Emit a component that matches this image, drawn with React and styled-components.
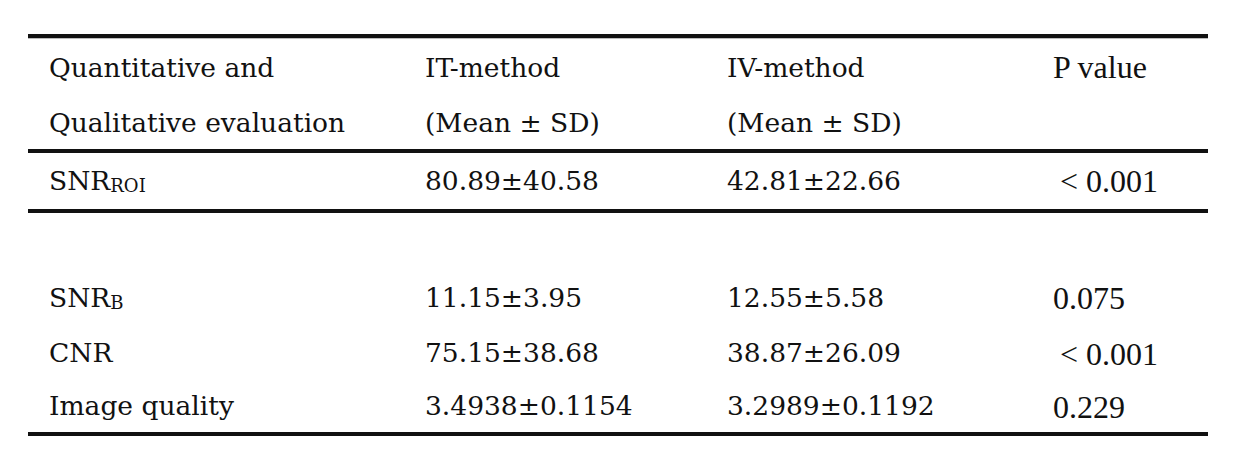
import React from 'react'
import styled, { createGlobalStyle } from 'styled-components'

const Global = createGlobalStyle`
  body {
    margin: 0;
    background: #fff;
  }
`

const Page = styled.div`
  padding: 34px 30px 0 28px;
  color: #111;
`

const Table = styled.table`
  width: 1180px;
  border-collapse: collapse;
  border-top: 4px solid #111;
  border-bottom: 4px solid #111;
  box-shadow: inset 0 1px 0 #bbb;
`

const Row = styled.tr`
  border-bottom: ${(p) => (p.$rule ? '4px solid #111' : 'none')};
`

const Cell = styled.td`
  height: ${(p) => p.$h || 56}px;
  padding: 0 0 0 ${(p) => 21 + (p.$indent || 0)}px;
  box-sizing: border-box;
  line-height: 1;
  vertical-align: ${(p) => (p.$top ? 'top' : 'middle')};
  white-space: nowrap;
  font-family: ${(p) =>
    p.$plain ? "'Liberation Serif', serif" : "'DejaVu Serif', 'Liberation Serif', serif"};
  font-size: ${(p) => (p.$plain ? 32 : 26.5)}px;
`

const Lines = styled.div`
  line-height: 55px;
  padding-top: 2px;
  height: 109px;
`

const Sub = styled.span`
  font-size: 0.68em;
  vertical-align: -0.12em;
  line-height: 0;
`

const cols = [376, 302, 326, 176]

const rows = [
  { label: 'SNR', sub: 'B', it: '11.15±3.95', iv: '12.55±5.58', p: '0.075', h: 56 },
  { label: 'CNR', it: '75.15±38.68', iv: '38.87±26.09', p: '< 0.001', indent: 7, h: 55 },
  { label: 'Image quality', it: '3.4938±0.1154', iv: '3.2989±0.1192', p: '0.229', h: 53 },
]

export default function App() {
  return (
    <Page>
      <Global />
      <Table>
        <colgroup>
          {cols.map((w, i) => (
            <col key={i} style={{ width: w }} />
          ))}
        </colgroup>
        <tbody>
          <Row $rule>
            <Cell $h={114} $top>
              <Lines>
                Quantitative and
                <br />
                Qualitative evaluation
              </Lines>
            </Cell>
            <Cell $h={114} $top>
              <Lines>
                IT-method
                <br />
                (Mean ± SD)
              </Lines>
            </Cell>
            <Cell $h={114} $top>
              <Lines>
                IV-method
                <br />
                (Mean ± SD)
              </Lines>
            </Cell>
            <Cell $h={114} $plain $top>
              <Lines>P value</Lines>
            </Cell>
          </Row>
          <Row $rule>
            <Cell $h={60}>
              SNR<Sub>ROI</Sub>
            </Cell>
            <Cell $h={60}>80.89±40.58</Cell>
            <Cell $h={60}>42.81±22.66</Cell>
            <Cell $h={60} $plain $indent={7}>
              &lt; 0.001
            </Cell>
          </Row>
          <Row>
            <Cell colSpan={4} $h={59} />
          </Row>
          {rows.map((r) => (
            <Row key={r.label}>
              <Cell $h={r.h}>
                {r.label}
                {r.sub && <Sub>{r.sub}</Sub>}
              </Cell>
              <Cell $h={r.h}>{r.it}</Cell>
              <Cell $h={r.h}>{r.iv}</Cell>
              <Cell $h={r.h} $plain $indent={r.indent}>
                {r.p}
              </Cell>
            </Row>
          ))}
        </tbody>
      </Table>
    </Page>
  )
}
